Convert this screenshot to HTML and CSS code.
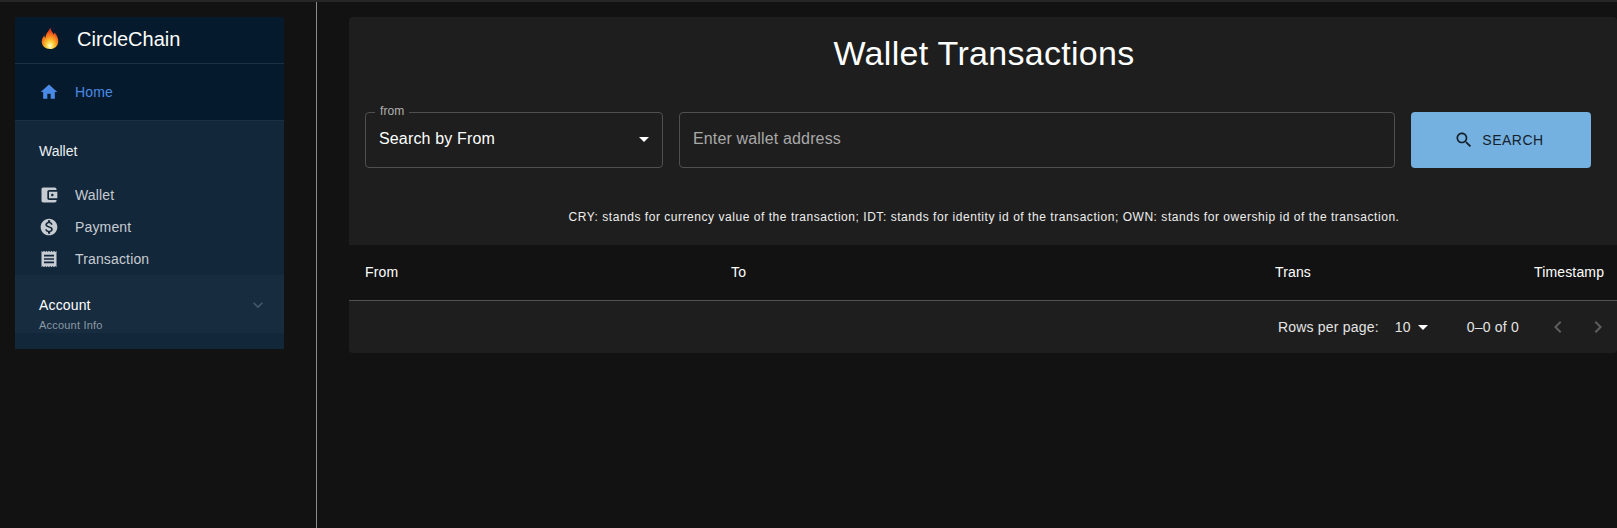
FILE: index.html
```html
<!DOCTYPE html>
<html lang="en">
<head>
    <meta charset="UTF-8">
    <meta name="viewport" content="width=device-width, initial-scale=1.0">
    <title>Wallet Transactions</title>
    <link rel="stylesheet" href="styles.css">
</head>
<body>
    <div class="layout">
        <aside class="side-col">
            <nav class="side-nav">
                <div class="brand">
                    <svg class="flame" viewBox="0 0 20 24" width="20" height="24">
                        <defs>
                            <radialGradient id="flamefill" cx="50%" cy="85%" r="72%">
                                <stop offset="0" stop-color="#fffbd8"/>
                                <stop offset="0.3" stop-color="#ffd23a"/>
                                <stop offset="0.62" stop-color="#fb8a1e"/>
                                <stop offset="1" stop-color="#e5391c"/>
                            </radialGradient>
                        </defs>
                        <path fill="url(#flamefill)" d="M10.500 1c.6 3.400 2.400 4.600 3.400 6.700.4-.8.5-1.500.4-2.200 2.300 2.200 4 5.300 4 8.700C18.300 19 14.700 22 10 22S1.700 19 1.700 14.500c0-2.500 1.200-4.500 2.700-6 0 1.100.3 2 1 2.700C5.500 7 8 4.500 10.500 1z"/>
                    </svg>
                    <span class="brand-name">CircleChain</span>
                </div>
                <a class="nav-item home-item">
                    <svg class="nav-icon" viewBox="0 0 24 24"><path d="M10 20v-6h4v6h5v-8h3L12 3 2 12h3v8z"/></svg>
                    <span>Home</span>
                </a>
                <div class="nav-group">
                    <div class="group-title">Wallet</div>
                    <a class="nav-item">
                        <svg class="nav-icon" viewBox="0 0 24 24"><path d="M21 18v1c0 1.100-.9 2-2 2H5c-1.110 0-2-.9-2-2V5c0-1.100.89-2 2-2h14c1.100 0 2 .9 2 2v1h-9c-1.110 0-2 .9-2 2v8c0 1.100.89 2 2 2h9zm-9-2h10V8H12v8zm4-2.500c-.83 0-1.500-.67-1.500-1.500s.67-1.500 1.500-1.500 1.500.67 1.500 1.500-.67 1.500-1.500 1.500z"/></svg>
                        <span>Wallet</span>
                    </a>
                    <a class="nav-item">
                        <svg class="nav-icon" viewBox="0 0 24 24"><path d="M12 2C6.480 2 2 6.480 2 12s4.480 10 10 10 10-4.480 10-10S17.520 2 12 2zm1.410 16.090V20h-2.670v-1.930c-1.710-.36-3.160-1.460-3.270-3.400h1.960c.1 1.050.82 1.870 2.650 1.870 1.960 0 2.400-.98 2.400-1.590 0-.83-.44-1.610-2.670-2.140-2.480-.6-4.180-1.620-4.180-3.670 0-1.720 1.390-2.840 3.110-3.210V4h2.670v1.950c1.860.45 2.790 1.860 2.850 3.390H14.300c-.05-1.110-.64-1.870-2.220-1.870-1.500 0-2.400.68-2.400 1.640 0 .84.65 1.390 2.670 1.910s4.180 1.390 4.180 3.910c-.01 1.830-1.380 2.830-3.120 3.160z"/></svg>
                        <span>Payment</span>
                    </a>
                    <a class="nav-item">
                        <svg class="nav-icon" viewBox="0 0 24 24"><path d="M3 22l1.500-1.500L6 22l1.500-1.500L9 22l1.500-1.500L12 22l1.500-1.500L15 22l1.500-1.500L18 22l1.500-1.500L21 22V2l-1.500 1.500L18 2l-1.500 1.500L15 2l-1.500 1.500L12 2l-1.500 1.500L9 2 7.500 3.500 6 2 4.500 3.500 3 2v20zM18 17H6v-2h12v2zm0-4H6v-2h12v2zm0-4H6V7h12v2z"/></svg>
                        <span>Transaction</span>
                    </a>
                </div>
                <div class="account-row">
                    <div>
                        <div class="account-title">Account</div>
                        <div class="account-sub">Account Info</div>
                    </div>
                    <svg class="chevron" viewBox="0 0 24 24"><path d="M16.590 8.590L12 13.170 7.410 8.590 6 10l6 6 6-6z"/></svg>
                </div>
                <div class="side-foot"></div>
            </nav>
        </aside>
        <main class="content">
            <section class="panel">
                <h1 class="page-title">Wallet Transactions</h1>
                <form class="search-row">
                    <div class="select-box">
                        <span class="float-label">from</span>
                        <span>Search by From</span>
                        <svg class="caret" viewBox="0 0 24 24"><path d="M7 10l5 5 5-5z"/></svg>
                    </div>
                    <div class="address-box">Enter wallet address</div>
                    <button class="search-btn" type="button">
                        <svg class="search-icon" viewBox="0 0 24 24"><path d="M15.500 14h-.79l-.28-.27C15.410 12.590 16 11.110 16 9.500 16 5.910 13.090 3 9.500 3S3 5.910 3 9.500 5.910 16 9.500 16c1.610 0 3.090-.59 4.230-1.570l.27.28v.79l5 4.990L20.490 19l-4.990-5zm-6 0C7.010 14 5 11.990 5 9.500S7.010 5 9.500 5 14 7.010 14 9.500 11.990 14 9.500 14z"/></svg>
                        SEARCH
                    </button>
                </form>
                <p class="legend">CRY: stands for currency value of the transaction; IDT: stands for identity id of the transaction; OWN: stands for owership id of the transaction.</p>
            </section>
            <div class="table-head">
                <span class="col-from">From</span>
                <span class="col-to">To</span>
                <span class="col-trans">Trans</span>
                <span class="col-time">Timestamp</span>
            </div>
            <div class="pager">
                <span>Rows per page:</span>
                <span class="pager-size">10
                    <svg class="caret" viewBox="0 0 24 24"><path d="M7 10l5 5 5-5z"/></svg>
                </span>
                <span class="pager-count">0–0 of 0</span>
                <svg class="pager-arrow" viewBox="0 0 24 24"><path d="M15.410 7.410L14 6l-6 6 6 6 1.410-1.410L10.830 12z"/></svg>
                <svg class="pager-arrow" viewBox="0 0 24 24"><path d="M10 6L8.590 7.410 13.170 12l-4.580 4.590L10 18l6-6z"/></svg>
            </div>
        </main>
    </div>
</body>
</html>
```
FILE: styles.css
```css
* {
    box-sizing: border-box;
}

body {
    margin: 0;
    background-color: #121212;
    color: #ffffff;
    font-family: "Liberation Sans", Arial, sans-serif;
    height: 528px;
    overflow: hidden;
}

.layout {
    display: flex;
    height: 100%;
    border-top: 2px solid #262626;
}

/* Sidebar */
.side-col {
    width: 317px;
    flex-shrink: 0;
    padding: 15px 32px 0 15px;
    border-right: 1px solid #8c8c8c;
}

.side-nav {
    width: 269px;
    background-color: #13273a;
    border-radius: 4px 4px 0 0;
    overflow: hidden;
}

.brand {
    display: flex;
    align-items: center;
    height: 47px;
    padding: 0 0 2px 25px;
    background-color: #051a2c;
    border-bottom: 1px solid #1d3040;
}

.flame {
    margin-right: 17px;
}

.brand-name {
    font-size: 20px;
}

.nav-item {
    display: flex;
    align-items: center;
    height: 32px;
    padding-left: 24px;
    font-size: 14px;
    letter-spacing: 0.15px;
    color: #c6ccd2;
}

.nav-item span {
    margin-left: 16px;
}

.nav-icon {
    width: 20px;
    height: 20px;
    fill: currentColor;
}

.home-item {
    height: 57px;
    color: #4a8ae6;
    background-color: #051a2c;
    border-bottom: 1px solid #1d3040;
}

.group-title {
    height: 58px;
    padding: 22px 0 0 24px;
    font-size: 14px;
    color: #eceff2;
}

.account-row {
    display: flex;
    justify-content: space-between;
    align-items: flex-start;
    height: 58px;
    padding: 22px 16px 0 24px;
    background-color: #172c3f;
}

.account-title {
    font-size: 14px;
    letter-spacing: 0.15px;
}

.account-sub {
    margin-top: 6px;
    font-size: 11px;
    letter-spacing: 0.2px;
    color: #8b98a5;
}

.chevron {
    width: 20px;
    height: 20px;
    margin-top: -2px;
    fill: #46586a;
}

.side-foot {
    height: 16px;
}

/* Main column */
.content {
    flex: 1;
    min-width: 0;
    padding-top: 15px;
    margin-left: 32px;
}

.panel {
    height: 228px;
    padding: 0 16px;
    background-color: #1e1e1e;
    border-radius: 4px 4px 0 0;
}

.page-title {
    margin: 0;
    padding: 16px 0 0 2px;
    font-size: 34px;
    font-weight: 400;
    line-height: 40px;
    letter-spacing: 0.3px;
    text-align: center;
}

.search-row {
    display: flex;
    gap: 16px;
    margin-top: 39px;
}

.select-box,
.address-box {
    position: relative;
    display: flex;
    align-items: center;
    height: 56px;
    padding: 0 13px 2px;
    border: 1px solid #4f4f4f;
    border-radius: 4px;
    font-size: 16px;
    letter-spacing: 0.15px;
}

.select-box {
    width: 298px;
    justify-content: space-between;
    padding-right: 6px;
}

.address-box {
    width: 716px;
    color: #a9a9a9;
}

.float-label {
    position: absolute;
    top: -9px;
    left: 9px;
    padding: 0 5px;
    font-size: 12px;
    line-height: 14px;
    letter-spacing: 0.1px;
    color: #b0b0b0;
    background-color: #1e1e1e;
}

.caret {
    width: 24px;
    height: 24px;
    fill: #ffffff;
}

.search-btn {
    display: flex;
    align-items: center;
    justify-content: center;
    gap: 8px;
    width: 180px;
    height: 56px;
    padding: 0 4px 0 0;
    border: none;
    border-radius: 4px;
    background-color: #74b1e0;
    color: #14212c;
    font-family: inherit;
    font-size: 14px;
    letter-spacing: 0.5px;
}

.search-icon {
    width: 20px;
    height: 20px;
    fill: currentColor;
}

.legend {
    margin: 41px 0 0;
    padding-left: 2px;
    font-size: 12px;
    line-height: 16px;
    letter-spacing: 0.54px;
    text-align: center;
    color: #eeeeee;
}

/* Table */
.table-head {
    display: flex;
    align-items: center;
    height: 56px;
    padding: 0 0 2px 16px;
    border-bottom: 1px solid #515151;
    font-size: 14px;
    letter-spacing: 0.15px;
}

.col-from {
    width: 366px;
}

.col-to {
    width: 544px;
}

.col-trans {
    width: 259px;
}

.pager {
    display: flex;
    align-items: center;
    justify-content: flex-end;
    height: 52px;
    padding-right: 7px;
    background-color: #1e1e1e;
    border-radius: 0 0 4px 4px;
    font-size: 14px;
    letter-spacing: 0.2px;
    color: #e4e4e4;
}

.pager-size {
    display: flex;
    align-items: center;
    margin-left: 16px;
}

.pager-count {
    margin: 0 27px 0 32px;
}

.pager-arrow {
    width: 24px;
    height: 24px;
    margin-left: 16px;
    fill: #5e5e5e;
}

.pager-count + .pager-arrow {
    margin-left: 0;
}
```
